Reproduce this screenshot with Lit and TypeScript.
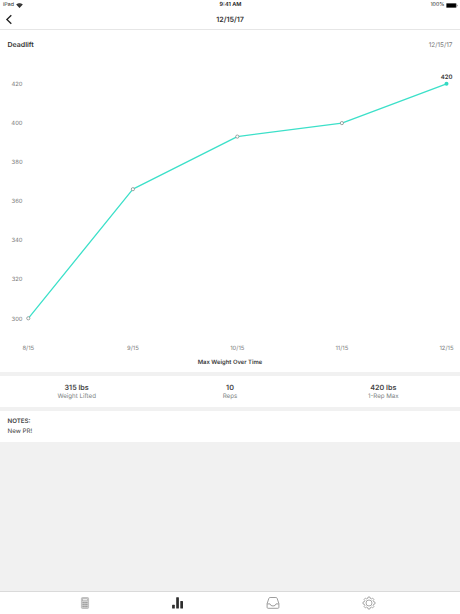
import { LitElement, html, svg, css } from "lit";
import { customElement } from "lit/decorators.js";

const POINTS = [
  { date: "8/15", x: 28.3, y: 318.3 },
  { date: "9/15", x: 132.9, y: 189.2 },
  { date: "10/15", x: 237.3, y: 136.6 },
  { date: "11/15", x: 341.9, y: 123.1 },
  { date: "12/15", x: 446.5, y: 83.8 },
];
const TICKS = [420, 400, 380, 360, 340, 320, 300];
const STATS = [
  { value: "315 lbs", label: "Weight Lifted" },
  { value: "10", label: "Reps" },
  { value: "420 lbs", label: "1-Rep Max" },
];

@customElement("weight-chart")
class WeightChart extends LitElement {
  static styles = css`
    :host { display: block; height: 318px; }
    svg { display: block; }
    text { font-family: Inter, "Liberation Sans", sans-serif; font-size: 5.9px; fill: #7c7c7c; text-rendering: geometricPrecision; }
    .title { font-weight: 600; font-size: 5.9px; fill: #3c3c3c; }
    .peak { font-weight: 600; font-size: 6px; fill: #333; }
    .line { fill: none; stroke: #3ce0c9; stroke-width: 1.3; stroke-linejoin: round; }
    .dot { fill: #fff; stroke: #7f8a87; stroke-width: 0.75; }
    .end { fill: #34d9c3; }
  `;
  render() {
    const last = POINTS.length - 1;
    return html`<svg width="460" height="318" viewBox="0 54 460 318">
      ${TICKS.map((t, i) => svg`<text x="22.6" y=${85.6 + i * 39.15} text-anchor="end">${t}</text>`)}
      <polyline class="line" points=${POINTS.map((p) => `${p.x},${p.y}`).join(" ")} />
      ${POINTS.map((p, i) => i === last
        ? svg`<circle class="end" cx=${p.x} cy=${p.y} r="2" />`
        : svg`<circle class="dot" cx=${p.x} cy=${p.y} r="1.6" />`)}
      ${POINTS.map((p) => svg`<text x=${p.x} y="349.6" text-anchor="middle">${p.date}</text>`)}
      <text class="peak" x="446.5" y="79.4" text-anchor="middle">420</text>
      <text class="title" x="230" y="363.6" text-anchor="middle">Max Weight Over Time</text>
    </svg>`;
  }
}

@customElement("app-root")
class AppRoot extends LitElement {
  static styles = css`
    :host {
      display: flex; flex-direction: column; box-sizing: border-box;
      width: 460px; height: 614px; overflow: hidden; background: #f1f1f1;
      font-family: Inter, "Liberation Sans", sans-serif; color: #333; text-rendering: geometricPrecision;
    }
    svg { display: block; }
    .head { height: 29px; flex: none; background: #fff; border-bottom: 1px solid #e6e6e6; box-sizing: content-box; }
    .status {
      display: grid; grid-template-columns: 1fr auto 1fr; align-items: center; box-sizing: border-box;
      height: 10px; padding: 1px 2px 0 3px; font-size: 5.3px; line-height: 9px; color: #222;
    }
    .left { display: flex; align-items: center; gap: 2.5px; }
    .right { display: flex; align-items: center; justify-content: flex-end; gap: 1.5px; }
    .status svg { margin-top: -1px; }
    .clock { font-weight: 600; font-size: 5.6px; }
    .nav { display: grid; grid-template-columns: 1fr auto 1fr; align-items: center; height: 19px; padding: 0 5px; }
    .date { font-size: 7.2px; font-weight: 600; line-height: 19px; }
    .panel { background: #fff; flex: none; }
    .chart { height: 342px; }
    .top { display: flex; justify-content: space-between; align-items: center; height: 24px; padding: 5px 7.5px 0; box-sizing: border-box; line-height: 19px; }
    .name { font-size: 7px; font-weight: 600; }
    .when { font-size: 6.4px; color: #777; padding-top: 1px; }
    .stats { display: grid; grid-template-columns: repeat(3, 1fr); margin-top: 4px; height: 31px; padding-top: 7px; box-sizing: border-box; text-align: center; }
    .value { font-size: 7.2px; font-weight: 600; line-height: 9px; color: #444; }
    .label { font-size: 6.2px; line-height: 10px; color: #7b7f82; }
    .notes { margin-top: 4px; height: 31px; padding: 6px 7.5px 0; box-sizing: border-box; font-size: 6.2px; line-height: 10px; color: #444; }
    .caption { font-weight: 600; }
    .tabs {
      display: grid; grid-template-columns: 94px 93px 97px 95px; justify-items: center; align-items: center;
      margin-top: auto; height: 22px; padding-left: 37.7px; background: #fff; border-top: 1px solid #dadada; flex: none;
    }
  `;
  render() {
    return html`
      <header class="head">
        <div class="status">
          <span class="left"><span>iPad</span>
            <svg width="7" height="5" viewBox="0 0 7 5"><path d="M.2 1.5Q3.5-1.2 6.8 1.5L3.5 5Z" fill="#222" /><path d="M1.2 2.2Q3.5.5 5.8 2.2M2.2 3.3Q3.5 2.4 4.8 3.3" fill="none" stroke="#aaa" stroke-width=".3" /></svg>
          </span>
          <span class="clock">9:41 AM</span>
          <span class="right"><span>100%</span>
            <svg width="12" height="5" viewBox="0 0 12 5"><rect x=".3" y=".3" width="10" height="4.4" rx=".8" fill="#000" stroke="#888" stroke-width=".5" /><rect x="10.8" y="1.7" width=".8" height="1.6" rx=".4" fill="#777" /></svg>
          </span>
        </div>
        <div class="nav">
          <svg width="8" height="11" viewBox="0 0 8 11"><path d="M6.3 1.2L1.9 5.5L6.3 9.8" fill="none" stroke="#222" stroke-width="1.35" /></svg>
          <span class="date">12/15/17</span>
        </div>
      </header>
      <section class="panel chart">
        <div class="top"><span class="name">Deadlift</span><span class="when">12/15/17</span></div>
        <weight-chart></weight-chart>
      </section>
      <section class="panel stats">
        ${STATS.map((s) => html`<div><div class="value">${s.value}</div><div class="label">${s.label}</div></div>`)}
      </section>
      <section class="panel notes"><div class="caption">NOTES:</div><div>New PR!</div></section>
      <nav class="tabs">
        <svg width="14" height="14" viewBox="0 0 14 14"><rect x="3.4" y="1.5" width="7.2" height="11" rx="1" fill="#d2d2d2" stroke="#a6a6a6" stroke-width=".6" /><rect x="4.7" y="2.8" width="4.6" height="2" fill="#eee" stroke="#a0a0a0" stroke-width=".5" /><path d="M4.5 6.7h1.3M6.4 6.7h1.3M8.2 6.7h1.3M4.5 8.7h1.3M6.4 8.7h1.3M8.2 8.7h1.3M4.5 10.7h1.3M6.4 10.7h1.3M8.2 10.7h1.3" stroke="#858585" stroke-width="1" /></svg>
        <svg width="14" height="14" viewBox="0 0 14 14" fill="#2e2e2e"><rect x="1.1" y="8.8" width="2.7" height="3.7" rx=".5" /><rect x="5.2" y="1.2" width="2.7" height="11.3" rx=".5" /><rect x="9.3" y="5" width="2.7" height="7.5" rx=".5" /></svg>
        <svg width="14" height="14" viewBox="0 0 14 14"><path d="M4.1 1.5H9.9Q10.8 1.5 11.1 2.3L12.9 7.6V11.3Q12.9 12.3 11.9 12.3H2.1Q1.1 12.3 1.1 11.3V7.6L2.9 2.3Q3.2 1.5 4.1 1.5ZM1.1 7.9H4Q4.4 10 7 10T10 7.9H12.9" fill="none" stroke="#999" stroke-width=".95" stroke-linejoin="round" /></svg>
        <svg width="14" height="14" viewBox="0 0 14 14"><g fill="none" stroke="#999" stroke-width=".85"><circle cx="7" cy="7" r="3" /><path stroke-linejoin="round" d="M6.1 1H7.9L8.3 2.4L9.4 2.9L10.6 2.1L11.9 3.4L11.1 4.6L11.6 5.7L13 6.1V7.9L11.6 8.3L11.1 9.4L11.9 10.6L10.6 11.9L9.4 11.1L8.3 11.6L7.9 13H6.1L5.7 11.6L4.6 11.1L3.4 11.9L2.1 10.6L2.9 9.4L2.4 8.3L1 7.9V6.1L2.4 5.7L2.9 4.6L2.1 3.4L3.4 2.1L4.6 2.9L5.7 2.4Z" /></g></svg>
      </nav>`;
  }
}
